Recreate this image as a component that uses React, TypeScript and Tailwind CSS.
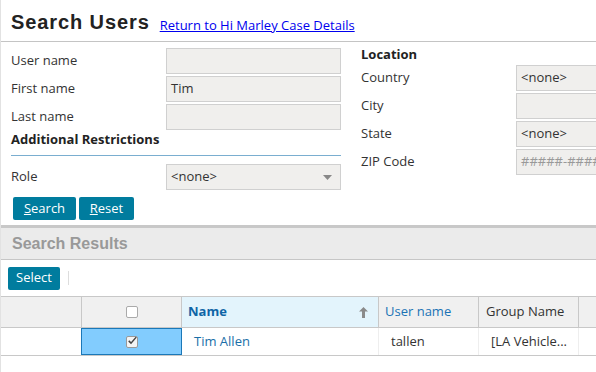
import React from "react";

const inputCls =
  "h-[26px] border border-[#d0d0d0] bg-[#f0efed] px-[4px] text-[13px] text-[#333] flex items-center";

const FormRow = ({ label, value }: { label: string; value?: string }) => (
  <div className="flex items-center h-[26px]">
    <div className="w-[155px] text-[13px] text-[#333]">{label}</div>
    <div className={`${inputCls} w-[175px]`}>{value}</div>
  </div>
);

const LocRow = ({ label, value, placeholder }: { label: string; value?: string; placeholder?: boolean }) => (
  <div className="flex items-center h-[26px]">
    <div className="w-[155px] text-[13px] text-[#333] shrink-0">{label}</div>
    <div className={`${inputCls} w-[120px] shrink-0 whitespace-nowrap overflow-hidden ${placeholder ? "text-[#999]" : ""}`}>
      {value}
    </div>
  </div>
);

const Btn = ({ children, w }: { children: React.ReactNode; w: string }) => (
  <button className={`${w} h-[23px] rounded-[2px] bg-[#007c9e] text-white text-[13px] flex items-center justify-center`}>
    {children}
  </button>
);

export default function App() {
  return (
    <div
      className="w-[596px] h-[372px] overflow-hidden bg-white border-l border-[#e2e2e2] text-[#333]"
      style={{ fontFamily: '"Open Sans", sans-serif' }}
    >
      <div className="flex items-end h-[41px] pl-[10px] pb-[9px]">
        <h1
          className="text-[20px] font-bold tracking-[0.9px] text-[#222] leading-none"
          style={{ fontFamily: '"Liberation Sans", Arial, sans-serif' }}
        >
          Search Users
        </h1>
        <a href="#" className="ml-[10px] text-[13px] text-[#0000ee] underline leading-none">
          Return to Hi Marley Case Details
        </a>
      </div>
      <div className="h-px bg-[#c4c4c4]" />

      <div className="flex pl-[10px] pt-[6px]">
        <div className="w-[331px] flex flex-col">
          <div className="flex flex-col gap-[2px]">
            <FormRow label="User name" />
            <FormRow label="First name" value="Tim" />
            <FormRow label="Last name" />
          </div>
          <div className="text-[13px] font-bold text-[#222] h-[18px] leading-[18px]">Additional Restrictions</div>
          <div className="h-px bg-[#7aaed0] mt-[7px] mb-[8px]" />
          <div className="flex items-center h-[26px]">
            <div className="w-[155px] text-[13px] text-[#333]">Role</div>
            <div className={`${inputCls} w-[175px] justify-between pr-[8px]`}>
              <span>&lt;none&gt;</span>
              <svg width="9" height="5" viewBox="0 0 9 5">
                <path d="M0 0h9L4.5 5z" fill="#888" />
              </svg>
            </div>
          </div>
          <div className="flex gap-[3px] mt-[7px] ml-[2px]">
            <Btn w="w-[63px]">
              <span><span className="underline">S</span>earch</span>
            </Btn>
            <Btn w="w-[55px]">
              <span><span className="underline">R</span>eset</span>
            </Btn>
          </div>
        </div>
        <div className="w-px h-[128px] bg-[#a9c3d6] ml-[9px] mt-[-1px]" />
        <div className="pl-[11px] flex flex-col gap-[2px] -mt-[2px]">
          <div className="text-[13px] font-bold text-[#222] h-[17px] leading-[17px]">Location</div>
          <LocRow label="Country" value="<none>" />
          <LocRow label="City" />
          <LocRow label="State" value="<none>" />
          <LocRow label="ZIP Code" value="#####-####" placeholder />
        </div>
      </div>

      <div className="mt-[5px] border-t-[3px] border-[#c8c8c8] bg-[#ebebeb] h-[35px] border-b border-b-[#c6c6c6] flex items-center pl-[11px]">
        <span
          className="text-[16px] font-bold text-[#999]"
          style={{ fontFamily: '"Liberation Sans", Arial, sans-serif' }}
        >
          Search Results
        </span>
      </div>

      <div className="flex items-center h-[36px] pl-[7px]">
        <Btn w="w-[52px]">Select</Btn>
        <div className="w-px h-[14px] bg-[#ddd] ml-[8px]" />
      </div>

      <div className="border-t border-b border-[#c8c8c8]">
        <div className="flex h-[31px] bg-[#f0f0f0] border-b border-[#c8c8c8] text-[13px]">
          <div className="w-[81px] border-r border-[#c8c8c8]" />
          <div className="w-[100px] border-r border-[#c8c8c8] flex items-center justify-center">
            <div className="w-[12px] h-[12px] border border-[#aaa] rounded-[2px] bg-white" />
          </div>
          <div className="w-[197px] border-r border-[#c8c8c8] bg-[#e3f4fc] flex items-center justify-between pl-[6px] pr-[10px]">
            <span className="font-bold text-[#0f65a6]">Name</span>
            <svg width="9" height="11" viewBox="0 0 9 11">
              <path d="M4.5 0L9 4.5H6V11H3V4.5H0z" fill="#8a8a8a" />
            </svg>
          </div>
          <div className="w-[100px] border-r border-[#c8c8c8] flex items-center pl-[6px] text-[#1a73b5]">User name</div>
          <div className="w-[100px] border-r border-[#c8c8c8] flex items-center pl-[7px]">Group Name</div>
          <div className="flex-1" />
        </div>
        <div className="flex h-[27px] text-[13px]">
          <div className="w-[81px] border-r border-[#eee]" />
          <div className="w-[101px] -ml-px border border-[#1b78b8] bg-[#82ccfe] flex items-center justify-center">
            <div className="w-[12px] h-[12px] border border-[#999] rounded-[2px] bg-[#f4f4f4] flex items-center justify-center">
              <svg width="12" height="11" viewBox="0 0 12 11" className="-mt-[3px] ml-[1px]">
                <path d="M1 6l3 3L11 1" stroke="#444" strokeWidth="2" fill="none" />
              </svg>
            </div>
          </div>
          <div className="w-[197px] border-r border-[#eee] flex items-center pl-[12px] text-[#1a6fa8]">Tim Allen</div>
          <div className="w-[100px] border-r border-[#eee] flex items-center pl-[12px]">tallen</div>
          <div className="w-[100px] border-r border-[#eee] flex items-center pl-[12px]">[LA Vehicle...</div>
          <div className="flex-1" />
        </div>
      </div>
    </div>
  );
}
